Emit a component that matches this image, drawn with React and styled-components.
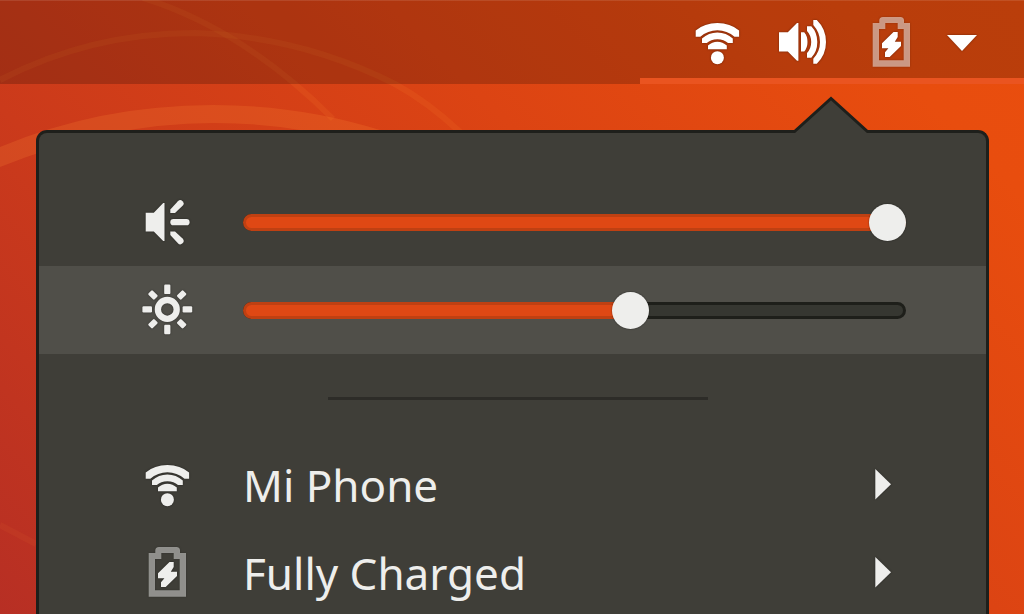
import React, { useState } from "react";
import styled, { createGlobalStyle } from "styled-components";

const GlobalStyle = createGlobalStyle`
  * {
    box-sizing: border-box;
  }

  body {
    margin: 0;
    font-family: "Noto Sans", "Open Sans", sans-serif;
    color: #f2f2f0;
  }
`;

// ==============================================================================
// Icons

const WifiIcon = () => (
  <Icon viewBox="0 0 62 62" aria-hidden="true">
    <path d="M9.7 17.6Q18.5 10.1 31.4 10.1T53.1 17.6V23.7H48.5Q41 17.2 31.4 17.2T14.3 23.7H9.7z" />
    <path d="M16 25.5Q22.5 19.5 31.4 19.5T46.8 25.5V30H42Q38 26.2 31.4 26.2T20.8 30H16z" />
    <path d="M22 32.5Q26 28.7 31.4 28.7T40.8 32.5V36.2H22z" />
    <circle cx="31.4" cy="44.7" r="6.5" />
  </Icon>
);

const VolumeIcon = () => (
  <Icon viewBox="0 0 62 62" aria-hidden="true">
    <path d="M6 19.3H14.8L24 10H25.4V47.7H24L14.8 38.4H6z" />
    <path d="M28 19.3H31.2Q34.5 23 34.5 29T31.2 38.4H28z" />
    <path d="M34 13.3H38.3Q44.3 19.5 44.3 29T38.3 44.7H34V40Q38.2 35.5 38.2 29T34 18z" />
    <path d="M40.3 7H43.8Q53 16 53 29T43.8 50.7H40.3V45.7Q47 38.5 47 29T40.3 12z" />
  </Icon>
);

const BatteryIcon = () => (
  <Icon viewBox="0 0 62 62" aria-hidden="true">
    <path
      opacity="0.5"
      fillRule="evenodd"
      d="M12.7 10H19.3V7.5Q19.3 4 23 4H40.3Q44 4 44 7.5V10H50V53.7H12.7zM25.3 10V16H19V47.3H43.7V16H37.7V10z"
    />
    <path d="M33.5 19H37.7V24L34.8 28.8H41V33L29.7 44H25V39.2L28.4 35.3H22V30.3z" />
  </Icon>
);

const SpeakerIcon = () => (
  <Icon viewBox="0 0 62 62" aria-hidden="true">
    <path d="M9.7 21.7H17.8L27.2 11.9H28.5V50H27.2L17.8 40.6H9.7z" />
    <path d="M34.3 22V18.4L41.9 10.2A3.2 3.2 0 0 1 46.6 14.8L39 22z" />
    <rect x="34.3" y="28" width="19.3" height="6.3" rx="3.1" />
    <path d="M34.3 40.4V44L41.9 52.2A3.2 3.2 0 0 0 46.6 47.6L39 40.4z" />
  </Icon>
);

const BrightnessIcon = () => (
  <Icon viewBox="0 0 62 62" aria-hidden="true">
    <circle
      cx="31.3"
      cy="30.4"
      r="9.4"
      fill="none"
      stroke="currentColor"
      strokeWidth="6.3"
    />
    {[0, 90, 180, 270].map((angle) => (
      <rect
        key={angle}
        x="28.2"
        y="5.5"
        width="6.2"
        height="9.6"
        rx="1.2"
        transform={`rotate(${angle} 31.3 30.4)`}
      />
    ))}
    {[45, 135, 225, 315].map((angle) => (
      <rect
        key={angle}
        x="28.3"
        y="5.8"
        width="6"
        height="8.6"
        rx="1.2"
        transform={`rotate(${angle} 31.3 30.4)`}
      />
    ))}
  </Icon>
);

// ==============================================================================
// Slider row

const SliderRow = ({ icon, label, initial, active }) => {
  const [value, setValue] = useState(initial);

  return (
    <Row $active={active}>
      {icon}
      <SliderBox>
        <Rail />
        <Fill style={{ width: `${value}%` }} />
        <Range
          type="range"
          min="0"
          max="100"
          aria-label={label}
          value={value}
          onChange={(e) => setValue(Number(e.target.value))}
        />
      </SliderBox>
    </Row>
  );
};

const MenuItem = ({ icon, text }) => (
  <Row as="button" type="button">
    {icon}
    <ItemText>{text}</ItemText>
    <ItemArrow viewBox="0 0 44 62" aria-hidden="true">
      <path d="M13.3 14L29 29.3L13.3 44.6z" />
    </ItemArrow>
  </Row>
);

const App = () => {
  return (
    <Desktop>
      <GlobalStyle />
      <Wallpaper viewBox="0 0 1024 614" aria-hidden="true">
        <path
          d="M0 147Q100 105 213 105Q300 105 380 130L300 130Q260 123 213 123Q110 123 0 167z"
          fill="#ff8a35"
          fillOpacity="0.2"
        />
        <g fill="none" stroke="#ff8a35" strokeOpacity="0.12" strokeWidth="6">
          <path d="M0 80Q90 33 195 33Q300 36 395 84Q428 102 460 132" />
          <path d="M143 -2Q243 29 333 119" />
          <path d="M0 525L36 544" strokeOpacity="0.07" />
        </g>
      </Wallpaper>

      <TopBar>
        <StatusButton type="button" aria-label="System menu">
          <WifiIcon />
          <VolumeIcon />
          <BatteryIcon />
          <Caret viewBox="0 0 30 62" aria-hidden="true">
            <path d="M0 22H30L15 38z" />
          </Caret>
        </StatusButton>
      </TopBar>

      <Menu>
        <Pointer viewBox="0 0 80 38" aria-hidden="true">
          <path d="M2 38V35.5H3.5L40 2.5L76.5 35.5H78V38z" fill="#3f3e38" />
          <path
            d="M0 35.5H3.5L40 2.5L76.5 35.5H80"
            fill="none"
            stroke="#1e1f1b"
            strokeWidth="3"
          />
        </Pointer>
        <SliderRow icon={<SpeakerIcon />} label="Volume" initial={100} />
        <SliderRow
          icon={<BrightnessIcon />}
          label="Brightness"
          initial={59}
          active
        />
        <Separator />
        <MenuItem icon={<WifiIcon />} text="Mi Phone" />
        <MenuItem icon={<BatteryIcon />} text="Fully Charged" />
      </Menu>
    </Desktop>
  );
};

const Desktop = styled.div`
  position: relative;
  display: flex;
  flex-direction: column;
  height: 100vh;
  overflow: hidden;
  background: linear-gradient(
    45deg,
    #b72f24 0%,
    #cb3a1b 31%,
    #dc4413 61%,
    #e84d0e 88%,
    #e94e0e 100%
  );
`;

const Wallpaper = styled.svg`
  position: absolute;
  top: 0;
  left: 0;
  width: 1024px;
  height: 614px;
`;

const TopBar = styled.header`
  position: relative;
  display: flex;
  justify-content: flex-end;
  flex-shrink: 0;
  height: 84px;
  background: rgba(0, 0, 0, 0.2);
  box-shadow: inset 0 1px 0 rgba(255, 255, 255, 0.1);
`;

const StatusButton = styled.button`
  display: flex;
  align-items: flex-start;
  gap: 25px;
  padding: 13px 47px 9px 46px;
  border: 0;
  background: none;
  box-shadow: inset 0 -6px 0 #ea5420;
  color: #ffffff;
  cursor: pointer;
`;

const Icon = styled.svg`
  flex-shrink: 0;
  width: 62px;
  height: 62px;
  fill: currentColor;
  filter: drop-shadow(0 0 1px rgba(0, 0, 0, 0.4));
`;

const Caret = styled(Icon)`
  width: 30px;
`;

const Menu = styled.main`
  position: relative;
  flex: 1 0 auto;
  margin: 46px 35px 0 36px;
  padding-top: 45px;
  border: 3px solid #1e1f1b;
  border-bottom: 0;
  border-radius: 11px 11px 0 0;
  background: #3f3e38;
`;

const Pointer = styled.svg`
  position: absolute;
  top: -37px;
  right: 115px;
  width: 80px;
  height: 38px;
`;

const Row = styled.div`
  display: flex;
  align-items: center;
  gap: 45px;
  width: 100%;
  height: 88px;
  padding: 0 80px 0 97px;
  border: 0;
  background: ${({ $active }) => ($active ? "#504f49" : "transparent")};
  color: #eeeeec;
  font: inherit;
  text-align: left;
`;

const SliderBox = styled.div`
  flex: 1;
  display: grid;
  align-items: center;
`;

const Rail = styled.div`
  grid-area: 1 / 1;
  height: 17px;
  border: 3px solid #1e1f1a;
  border-radius: 9px;
  background: #363731;
`;

const Fill = styled(Rail)`
  border-color: #bf4012;
  background: #df4814;
`;

const Range = styled.input`
  grid-area: 1 / 1;
  width: 100%;
  height: 38px;
  margin: 0;
  appearance: none;
  background: transparent;
  cursor: pointer;

  &::-webkit-slider-thumb {
    appearance: none;
    width: 37px;
    height: 37px;
    border: 0;
    border-radius: 50%;
    background: #eeeeec;
    box-shadow: 0 0 1px 1px rgba(0, 0, 0, 0.15);
  }
`;

const Separator = styled.hr`
  height: 3px;
  margin: 43px 278px 42px 289px;
  border: 0;
  background: #2d2c28;
`;

const ItemText = styled.span`
  flex: 1;
  padding-bottom: 2px;
  font-size: 44px;
  line-height: 60px;
`;

const ItemArrow = styled(Icon)`
  width: 44px;
`;

export default App;
